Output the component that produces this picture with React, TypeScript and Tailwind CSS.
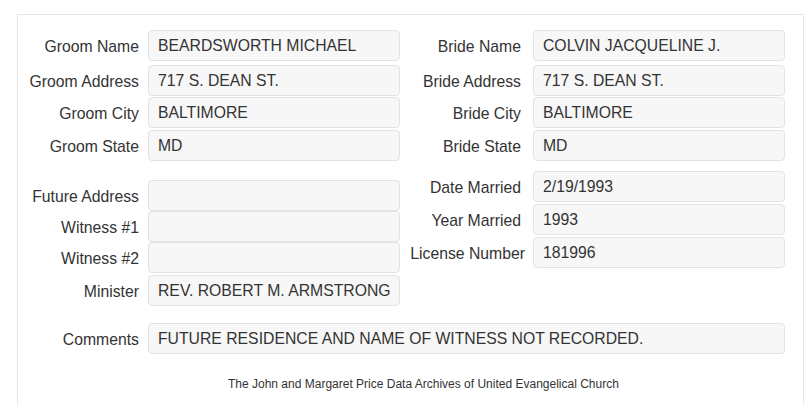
import React from 'react';

type Field = { label: string; value: string; gap?: string };

const groomFields: Field[] = [
  { label: 'Groom Name', value: 'BEARDSWORTH MICHAEL' },
  { label: 'Groom Address', value: '717 S. DEAN ST.', gap: 'mt-[4px]' },
  { label: 'Groom City', value: 'BALTIMORE', gap: 'mt-px' },
  { label: 'Groom State', value: 'MD', gap: 'mt-[2px]' },
];

const brideFields: Field[] = [
  { label: 'Bride Name', value: 'COLVIN JACQUELINE J.' },
  { label: 'Bride Address', value: '717 S. DEAN ST.', gap: 'mt-[4px]' },
  { label: 'Bride City', value: 'BALTIMORE', gap: 'mt-px' },
  { label: 'Bride State', value: 'MD', gap: 'mt-[2px]' },
];

const otherLeft: Field[] = [
  { label: 'Future Address', value: '' },
  { label: 'Witness #1', value: '' },
  { label: 'Witness #2', value: '' },
  { label: 'Minister', value: 'REV. ROBERT M. ARMSTRONG', gap: 'mt-[2px]' },
];

const otherRight: Field[] = [
  { label: 'Date Married', value: '2/19/1993' },
  { label: 'Year Married', value: '1993', gap: 'mt-[2px]' },
  { label: 'License Number', value: '181996', gap: 'mt-[2px]' },
];

function Row({ field, side }: { field: Field; side: 'left' | 'right' }) {
  const labelClass =
    side === 'left'
      ? 'w-[130px] pr-[9px]'
      : field.label === 'License Number'
        ? 'w-[133px] pr-[8px]'
        : 'w-[133px] pr-[12px]';
  return (
    <div className={`flex items-center ${field.gap ?? ''}`}>
      <div className={`${labelClass} shrink-0 whitespace-nowrap text-right pt-[3px] text-[#333]`}>
        {field.label}
      </div>
      <div className="w-[252px] h-[31px] shrink-0 flex items-center px-[9px] bg-[#f7f7f7] border border-[#e3e3e3] rounded-[4px] text-[#333] whitespace-nowrap overflow-hidden">
        {field.value}
      </div>
    </div>
  );
}

export default function App() {
  return (
    <div className="w-[805px] h-[405px] overflow-hidden bg-white font-['Liberation_Sans',Arial,sans-serif] text-[15.75px] leading-none">
      <div className="ml-[17px] mt-[14px] w-[787px] h-[420px] border border-[#e6e6e6] pt-[15px]">
        <div className="flex">
          <div className="flex flex-col w-[382px]">
            {groomFields.map((f) => (
              <Row key={f.label} field={f} side="left" />
            ))}
          </div>
          <div className="flex flex-col">
            {brideFields.map((f) => (
              <Row key={f.label} field={f} side="right" />
            ))}
          </div>
        </div>

        <div className="flex mt-[10px]">
          <div className="flex flex-col w-[382px] pt-[9px]">
            {otherLeft.map((f) => (
              <Row key={f.label} field={f} side="left" />
            ))}
          </div>
          <div className="flex flex-col">
            {otherRight.map((f) => (
              <Row key={f.label} field={f} side="right" />
            ))}
          </div>
        </div>

        <div className="flex items-center mt-[17px]">
          <div className="w-[130px] pr-[9px] shrink-0 text-right pt-[3px] text-[#333]">Comments</div>
          <div className="w-[637px] h-[31px] flex items-center px-[9px] bg-[#f7f7f7] border border-[#e3e3e3] rounded-[4px] text-[#333] whitespace-nowrap">
            FUTURE RESIDENCE AND NAME OF WITNESS NOT RECORDED.
          </div>
        </div>

        <div className="mt-[24px] pl-[210px] text-[12px] text-[#333]">
          The John and Margaret Price Data Archives of United Evangelical Church
        </div>
      </div>
    </div>
  );
}
